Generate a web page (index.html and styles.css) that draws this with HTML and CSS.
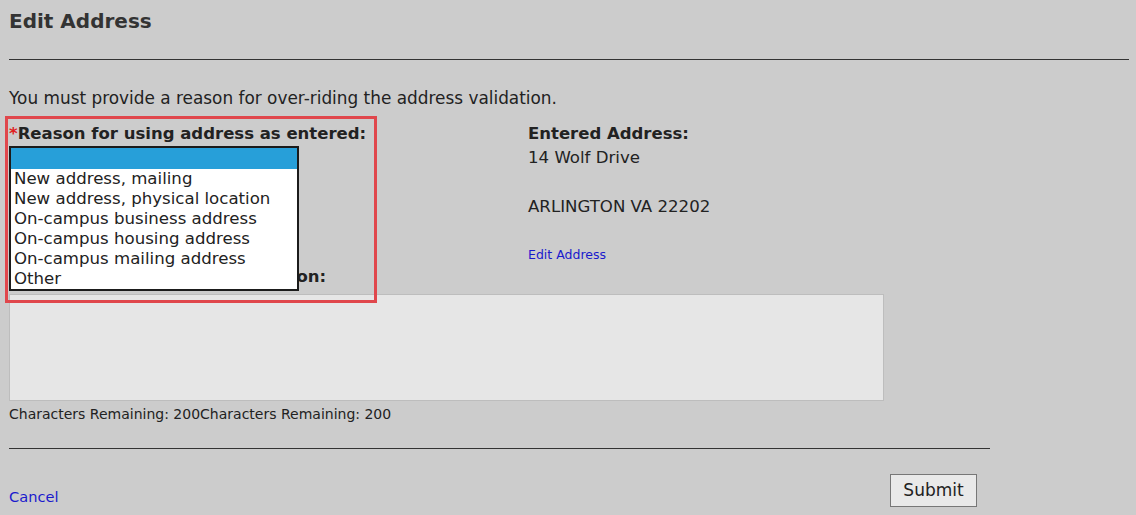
FILE: index.html
```html
<!DOCTYPE html>
<html lang="en">
<head>
    <meta charset="UTF-8">
    <meta name="viewport" content="width=device-width, initial-scale=1.0">
    <title>Edit Address</title>
    <link rel="stylesheet" href="styles.css">
</head>
<body>
    <div class="page">
        <h2 class="title">Edit Address</h2>
        <hr class="rule">
        <p class="notice">You must provide a reason for over-riding the address validation.</p>

        <div class="columns">
            <div class="col-left">
                <div class="field-label"><span class="req">*</span>Reason for using address as entered:</div>
                <div class="select-wrap">
                    <div class="select-closed"></div>
                    <ul class="dropdown">
                        <li class="selected">&nbsp;</li>
                        <li>New address, mailing</li>
                        <li>New address, physical location</li>
                        <li>On-campus business address</li>
                        <li>On-campus housing address</li>
                        <li>On-campus mailing address</li>
                        <li>Other</li>
                    </ul>
                </div>
            </div>
            <div class="col-right">
                <div class="field-label">Entered Address:</div>
                <div class="addr-line first">14 Wolf Drive</div>
                <div class="addr-line">&nbsp;</div>
                <div class="addr-line">ARLINGTON VA 22202</div>
                <a href="#" class="edit-link">Edit Address</a>
            </div>
        </div>

        <div class="field-label second">Please give a further explanation:</div>
        <textarea class="explain"></textarea>
        <div class="remaining">Characters Remaining: 200Characters Remaining: 200</div>

        <hr class="rule short">

        <div class="actions">
            <a href="#" class="cancel">Cancel</a>
            <button type="button" class="submit">Submit</button>
        </div>

        <div class="highlight"></div>
    </div>
</body>
</html>
```

FILE: styles.css
```css
body {
    margin: 0;
    background: #cccccc;
    font-family: "DejaVu Sans", Verdana, sans-serif;
    color: #222;
}
.page {
    position: relative;
    padding: 9px 7px 0 9px;
}
.title {
    margin: 0;
    font-size: 20px;
    font-weight: bold;
    color: #333;
    line-height: 24px;
}
.rule {
    border: none;
    border-top: 1px solid #333;
    margin: 26px 0 0 0;
}
.rule.short {
    width: 981px;
    margin-top: 25px;
}
.notice {
    margin: 28px 0 0 0;
    font-size: 16.9px;
    line-height: 20px;
    color: #222;
}
.columns {
    display: flex;
    margin-top: 16px;
}
.col-left {
    width: 519px;
}
.field-label {
    font-size: 16.5px;
    font-weight: bold;
    line-height: 20px;
    color: #222;
}
.req {
    color: #e02020;
}
.select-wrap {
    position: relative;
    margin-top: 2px;
}
.select-closed {
    width: 290px;
    height: 22px;
}
.dropdown {
    position: absolute;
    top: 0;
    left: 0;
    width: 286px;
    margin: 0;
    padding: 0;
    list-style: none;
    background: #fff;
    border: 2px solid #1b1b1b;
    font-size: 16.6px;
    line-height: 20px;
    color: #222;
    z-index: 2;
}
.dropdown li {
    padding-left: 3px;
    white-space: nowrap;
}
.dropdown li.selected {
    background: #279fd9;
    height: 21px;
}
.addr-line {
    font-size: 16.6px;
    line-height: 24.5px;
    color: #222;
}
.addr-line.first {
    margin-top: 2px;
}
.edit-link {
    display: block;
    margin-top: 27px;
    font-size: 12.5px;
    line-height: 15px;
    color: #1a1acc;
    text-decoration: none;
}
.field-label.second {
    margin-top: 5px;
}
.explain {
    display: block;
    margin-top: 7px;
    width: 875px;
    height: 107px;
    box-sizing: border-box;
    background: #e6e6e6;
    border: 1px solid #bdbdbd;
    resize: none;
}
.remaining {
    margin-top: 5px;
    font-size: 14px;
    line-height: 17px;
    color: #222;
}
.actions {
    display: flex;
    justify-content: space-between;
    align-items: flex-end;
    width: 968px;
    margin-top: 25px;
}
.cancel {
    font-size: 14.6px;
    line-height: 17px;
    color: #1a1acc;
    text-decoration: none;
    margin-bottom: 2px;
}
.submit {
    font-family: "DejaVu Sans", Verdana, sans-serif;
    font-size: 17px;
    color: #222;
    background: #e9e9e9;
    border: 1px solid #777;
    padding: 0;
    width: 87px;
    height: 33px;
}
.highlight {
    position: absolute;
    left: 5px;
    top: 116px;
    width: 366px;
    height: 181px;
    border: 3px solid #e0474c;
    pointer-events: none;
}
```
